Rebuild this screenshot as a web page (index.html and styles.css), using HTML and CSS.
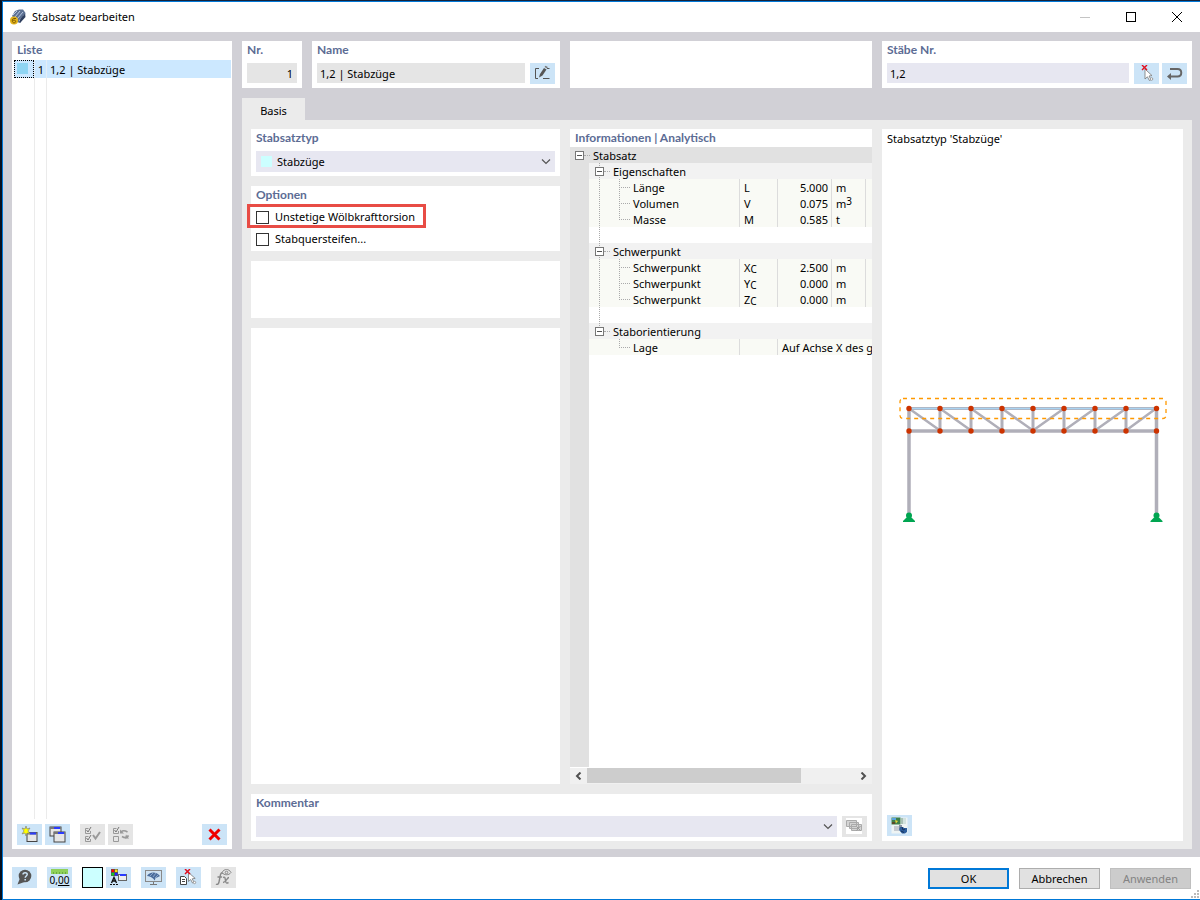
FILE: index.html
```html
<!DOCTYPE html>
<html lang="de">
<head>
    <meta charset="UTF-8">
    <meta name="viewport" content="width=device-width, initial-scale=1">
    <title>Stabsatz bearbeiten</title>
    <link rel="stylesheet" href="styles.css">
</head>
<body>
<div class="window">
    <header class="titlebar">
        <svg class="app-icon" width="16" height="16" viewBox="0 0 16 16">
            <path d="M2 7 5 2 9 .5 13 .5 15.500 4 15 7 10 14 7 13z" fill="#5d7193"/>
            <path d="M3 6 7 2M5 8l5-6M7 10l6-7M9 12l5-6" stroke="#b9c8e0" stroke-width="1"/>
            <path d="M10 14c-1-3 1-6 5-9l.5 3z" fill="#2f3f5e"/>
            <circle cx="4" cy="11.500" r="4" fill="#e3b31c"/>
            <path d="M6 9.500H3.700c-1 0-1.400.7-1.400 2s.4 2.300 1.600 2.300 1.700-.5 1.700-1.400-.6-1.200-1.500-1.200H2.500" fill="none" stroke="#7c5a00"/>
        </svg>
        <h1>Stabsatz bearbeiten</h1>
        <button class="win-btn" aria-label="Minimieren" disabled><svg width="12" height="12"><path d="M1 6.500h10" stroke="#c4c4c4"/></svg></button>
        <button class="win-btn" aria-label="Maximieren"><svg width="12" height="12"><rect x="1.500" y="1.500" width="9" height="9" fill="none" stroke="#000"/></svg></button>
        <button class="win-btn" aria-label="Schließen"><svg width="12" height="12"><path d="M1 1l10 10M11 1 1 11" stroke="#000"/></svg></button>
    </header>

    <main class="workspace">
        <section class="panel list-panel">
            <h2>Liste</h2>
            <ul class="list">
                <li class="selected"><span class="focus"><i></i></span><span class="num">1</span><span class="txt">1,2 | Stabzüge</span></li>
            </ul>
            <div class="toolbar">
                <button class="tool" aria-label="Neu">
                    <svg width="17" height="17" viewBox="0 0 17 17"><rect x="6" y="6.500" width="10" height="9" fill="#e6e6e6" stroke="#444"/><path d="M6 7.500h10" stroke="#777" stroke-width="2"/><path d="M9 7.500h6" stroke="#2a3cff" stroke-width="2"/><path d="M5 0l1 3 3-1-2 3 2 3-3-1-1 3-1-3-3 1 2-3-2-3 3 1z" fill="#ff0" stroke="#777" stroke-width=".6"/></svg>
                </button>
                <button class="tool" aria-label="Kopieren">
                    <svg width="17" height="17" viewBox="0 0 17 17"><rect x="1" y="1" width="11" height="9" fill="#e6e6e6" stroke="#444"/><path d="M1 2h11" stroke="#777" stroke-width="2"/><path d="M5 2h6" stroke="#2a3cff" stroke-width="2"/><rect x="5" y="6" width="11" height="10" fill="#e6e6e6" stroke="#444"/><path d="M5 7h11" stroke="#777" stroke-width="2"/><path d="M9 7h6" stroke="#2a3cff" stroke-width="2"/></svg>
                </button>
                <button class="tool off group" aria-label="Alle auswählen" disabled>
                    <svg width="17" height="17" viewBox="0 0 17 17" fill="none" stroke="#999"><path d="M4.500 2.500h-3v5h5V5M4.500 10.500h-3v5h5V13"/><path d="M2.500 4l1.500 2L7 1M2.500 12l1.500 2L7 9" stroke="#777"/><path d="M9 9l2.500 3.500L16 6" stroke-width="2"/></svg>
                </button>
                <button class="tool off" aria-label="Auswahl umkehren" disabled>
                    <svg width="17" height="17" viewBox="0 0 17 17" fill="none" stroke="#999"><path d="M4.500 2.500h-3v5h5V5M1.500 10.500h5v5h-5z"/><path d="M2.500 4l1.500 2L7 1" stroke="#777"/><path d="M9 6c2-2 4-1.500 6.500 0M16.500 9.500c-1.500 2.500-4 2.500-6.500 1" stroke-width="1.600"/><path d="M8 3.500V7.500h4zM17 12.500H13l1-4z" fill="#999" stroke="none"/></svg>
                </button>
                <button class="tool last" aria-label="Löschen">
                    <svg width="17" height="17" viewBox="0 0 17 17"><path d="M3.500 3.500l10 10M13.500 3.500l-10 10" stroke="#f00000" stroke-width="3"/></svg>
                </button>
            </div>
        </section>

        <div class="editor">
            <div class="head-row">
                <div class="head-left">
                    <section class="panel nr">
                        <h2><label for="nr">Nr.</label></h2>
                        <input id="nr" class="field readonly" value="1" readonly>
                    </section>
                    <section class="panel">
                        <h2><label for="name">Name</label></h2>
                        <div class="row">
                            <input id="name" class="field readonly" value="1,2 | Stabzüge" readonly>
                            <button class="tool" aria-label="Name bearbeiten">
                                <svg width="17" height="17" viewBox="0 0 17 17"><path d="M5 3.500H1.500v10H4M9 13.500h6.500M13 3.500h2.500" fill="none" stroke="#555"/><path d="M5 12.500 6 9l4-6 2.500 1.500-4 6z" fill="#555"/><path d="M10.500 2 11.500.7l2.300 1.400-.8 1.400z" fill="#777"/></svg>
                            </button>
                        </div>
                    </section>
                </div>
                <section class="panel"></section>
                <section class="panel">
                    <h2><label for="staebe">Stäbe Nr.</label></h2>
                    <div class="row">
                        <input id="staebe" class="field" value="1,2">
                        <div class="tools">
                            <button class="tool" aria-label="Stäbe auswählen">
                                <svg width="17" height="17" viewBox="0 0 17 17"><path d="M7 4v10l2.400-2.200 2 3.700 1.600-.9-2-3.600 3-.4z" fill="#fff" stroke="#777" stroke-width=".8"/><path d="M4 0l5 5M9 0 4 5" stroke="#e01020" stroke-width="1.400"/><circle cx="13.500" cy="14" r="1.300" fill="#fff" stroke="#888" stroke-width=".8"/></svg>
                            </button>
                            <button class="tool" aria-label="Richtung umkehren">
                                <svg width="17" height="17" viewBox="0 0 17 17"><path d="M4 4h7.500c5 0 5 7.500 0 7.500H4" fill="none" stroke="#666" stroke-width="2"/><path d="M1 11.500 5 8v7z" fill="#666"/></svg>
                            </button>
                        </div>
                    </div>
                </section>
            </div>

            <nav class="tabs"><button class="tab">Basis</button></nav>

            <div class="tab-body">
                <div class="col-left">
                    <section class="panel">
                        <h2><label for="typ">Stabsatztyp</label></h2>
                        <div class="combo">
                            <i class="swatch"></i>
                            <select id="typ"><option>Stabzüge</option></select>
                            <svg class="chevron" width="10" height="6"><path d="M1 .5l4 4 4-4" fill="none" stroke="#555" stroke-width="1.200"/></svg>
                        </div>
                    </section>
                    <section class="panel options">
                        <h2>Optionen</h2>
                        <label class="check marked"><input type="checkbox">Unstetige Wölbkrafttorsion</label>
                        <label class="check"><input type="checkbox">Stabquersteifen...</label>
                    </section>
                    <section class="panel spare"></section>
                    <section class="panel fill"></section>
                </div>

                <section class="panel info">
                    <h2>Informationen | Analytisch</h2>
                    <div class="tree-area">
                        <table class="tree">
                            <colgroup><col class="c-name"><col class="c-sym"><col class="c-val"><col class="c-unit"><col></colgroup>
                            <tbody>
                                <tr class="root"><td colspan="5"><div class="node"><button class="toggle" aria-label="Stabsatz zuklappen"></button><i class="dash"></i>Stabsatz</div></td></tr>
                                <tr class="group"><td colspan="5"><div class="node rail"><button class="toggle" aria-label="Eigenschaften zuklappen"></button><i class="dash"></i>Eigenschaften</div></td></tr>
                                <tr class="leaf"><td><div class="node rail"><i class="branch"></i>Länge</div></td><td>L</td><td class="val">5.000</td><td>m</td><td></td></tr>
                                <tr class="leaf"><td><div class="node rail"><i class="branch"></i>Volumen</div></td><td>V</td><td class="val">0.075</td><td>m<sup>3</sup></td><td></td></tr>
                                <tr class="leaf"><td><div class="node rail"><i class="branch end"></i>Masse</div></td><td>M</td><td class="val">0.585</td><td>t</td><td></td></tr>
                                <tr><td colspan="5"><div class="node rail"></div></td></tr>
                                <tr class="group"><td colspan="5"><div class="node rail"><button class="toggle" aria-label="Schwerpunkt zuklappen"></button><i class="dash"></i>Schwerpunkt</div></td></tr>
                                <tr class="leaf"><td><div class="node rail"><i class="branch"></i>Schwerpunkt</div></td><td>X<sub>C</sub></td><td class="val">2.500</td><td>m</td><td></td></tr>
                                <tr class="leaf"><td><div class="node rail"><i class="branch"></i>Schwerpunkt</div></td><td>Y<sub>C</sub></td><td class="val">0.000</td><td>m</td><td></td></tr>
                                <tr class="leaf"><td><div class="node rail"><i class="branch end"></i>Schwerpunkt</div></td><td>Z<sub>C</sub></td><td class="val">0.000</td><td>m</td><td></td></tr>
                                <tr><td colspan="5"><div class="node rail"></div></td></tr>
                                <tr class="group"><td colspan="5"><div class="node rail stop"><button class="toggle" aria-label="Staborientierung zuklappen"></button><i class="dash"></i>Staborientierung</div></td></tr>
                                <tr class="leaf"><td><div class="node"><i class="branch end"></i>Lage</div></td><td></td><td colspan="3">Auf Achse X des g</td></tr>
                            </tbody>
                        </table>
                    </div>
                    <div class="scrollbar">
                        <button aria-label="Nach links"><svg width="7" height="8"><path d="M5.500 .5 2 4l3.500 3.500" fill="none" stroke="#505050" stroke-width="2"/></svg></button>
                        <div class="track"><div class="thumb"></div></div>
                        <button aria-label="Nach rechts"><svg width="7" height="8"><path d="M1.500 .5 5 4 1.500 7.500" fill="none" stroke="#505050" stroke-width="2"/></svg></button>
                    </div>
                </section>

                <section class="panel comment">
                    <h2><label for="kommentar">Kommentar</label></h2>
                    <div class="row">
                        <div class="combo">
                            <select id="kommentar"><option></option></select>
                            <svg class="chevron" width="10" height="6"><path d="M1 .5l4 4 4-4" fill="none" stroke="#555" stroke-width="1.200"/></svg>
                        </div>
                        <button class="tool off" aria-label="Kommentar übernehmen" disabled>
                            <svg width="17" height="17" viewBox="0 0 17 17"><path d="M0 0h16v16H0z" fill="#fff"/><g fill="#d4d4d4" stroke="#aaa"><path d="M.5 2.500h10v6H.5zM3.500 4.500h9v6h-9zM5.500 6.500h10v6h-10z"/></g><path d="M10.500 8.500l4 4M14.500 8l-4 4.500" stroke="#999"/></svg>
                        </button>
                    </div>
                </section>

                <section class="panel preview">
                    <p>Stabsatztyp 'Stabzüge'</p>
                    <div class="stage">
                        <svg class="truss" viewBox="0 0 268 126">
                            <g fill="none" stroke="#b0afb9" stroke-width="3">
                                <path d="M10 10v110M257.500 10v110" stroke-width="3.500"/>
                                <path d="M10 34h248" stroke-width="3.500"/>
                                <path d="M41 11v22M72 11v22M103 11v22M134 11v22M165 11v22M196 11v22M227 11v22"/>
                                <path d="M10 11.500l31 22M41 11.500l31 22M72 11.500l31 22M103 11.500l31 22l31-22M165 33.500l31-22M196 33.500l31-22M227 33.500l30-22" stroke-width="2.500"/>
                                <path d="M10 11.500h248"/>
                            </g>
                            <path d="M10 11.500h248" stroke="#a9d3f2" stroke-width="1.500"/>
                            <rect x="1" y="1.500" width="266" height="20" rx="3" fill="none" stroke="#f90" stroke-width="1.300" stroke-dasharray="4 4"/>
                            <g fill="#cc3300">
                                <circle cx="10" cy="11.500" r="2.700"/><circle cx="41" cy="11.500" r="2.700"/><circle cx="72" cy="11.500" r="2.700"/><circle cx="103" cy="11.500" r="2.700"/><circle cx="134" cy="11.500" r="2.700"/><circle cx="165" cy="11.500" r="2.700"/><circle cx="196" cy="11.500" r="2.700"/><circle cx="227" cy="11.500" r="2.700"/><circle cx="257.500" cy="11.500" r="2.700"/>
                                <circle cx="10" cy="34" r="2.700"/><circle cx="41" cy="34" r="2.700"/><circle cx="72" cy="34" r="2.700"/><circle cx="103" cy="34" r="2.700"/><circle cx="134" cy="34" r="2.700"/><circle cx="165" cy="34" r="2.700"/><circle cx="196" cy="34" r="2.700"/><circle cx="227" cy="34" r="2.700"/><circle cx="257.500" cy="34" r="2.700"/>
                            </g>
                            <g fill="#00a551">
                                <circle cx="10" cy="118.500" r="3"/><path d="M4 125v-1l3.500-3.500h5l3.500 3.500v1z"/>
                                <circle cx="257.500" cy="118.500" r="3"/><path d="M251.500 125v-1l3.500-3.500h5l3.500 3.500v1z"/>
                            </g>
                        </svg>
                    </div>
                    <button class="tool" aria-label="Bild speichern">
                        <svg width="17" height="17" viewBox="0 0 17 17"><path d="M.5.500h16v16H.5z" fill="#eef4f4"/><path d="M.5.500h9v7h-9z" fill="#3d7f4a"/><path d="M1 1h4v2H1z" fill="#5aa4e0"/><path d="M4 3l3 1-2 2.500z" fill="#e8d23a"/><path d="M1 5h3v2H1z" fill="#5a4a2a"/><path d="M10 1h2v6h-2z" fill="#a9c0b5"/><path d="M12 1h3v6h-3z" fill="#d2e2de"/><path d="M3 9h5v5H3z" fill="#c5cad0"/><path d="M8 8h3v4H8z" fill="#8793a5"/><path d="M9 10h3l1 1h3v4l-2 1.500h-3L8 13z" fill="#2c5d9c"/><path d="M11 10l1 3 2-1M10 14l3 1.500" stroke="#14305c" fill="none"/></svg>
                    </button>
                </section>
            </div>
        </div>
    </main>

    <footer class="footer">
        <button class="tool" aria-label="Hilfe">
            <svg width="17" height="17" viewBox="0 0 17 17"><circle cx="9" cy="7" r="6.300" fill="#555"/><path d="M4 9 1.500 15.500l7-2.500z" fill="#555"/><path d="M7 5.500C7 3 11.500 3 11.200 5.500 11 7 9.200 7 9.200 8.800M9.200 10v1.500" fill="none" stroke="#cce4f7" stroke-width="1.500"/></svg>
        </button>
        <button class="tool units" aria-label="Einheiten">
            <svg width="17" height="5"><path d="M0 0h17v5H0z" fill="#8ed05a"/><path d="M2.500 3v2M5.500 3v2M8.500 3v2M11.500 3v2M14.500 3v2" stroke="#6aaa40"/></svg>
            <span>0,<u>00</u></span>
        </button>
        <button class="color" aria-label="Farbe"></button>
        <button class="tool" aria-label="Darstellung">
            <svg width="17" height="17" viewBox="0 0 17 17"><path d="M1 0h7v7H1z" fill="#555"/><path d="M1.500.5h2.500V3H1.500z" fill="#f00"/><path d="M5 .5h2.500V3H5z" fill="#fd0"/><path d="M1.500 4H4v2.500H1.500z" fill="#1c2"/><path d="M5 4h2.500v2.500H5z" fill="#22f"/><path d="M1.500 14 4 8.500 6.500 14M2.500 12h3" fill="none" stroke="#111" stroke-width="1.400"/><path d="M0 15.500h9" stroke="#111" stroke-dasharray="2 1"/><rect x="8.500" y="5.500" width="8" height="6" fill="#eee" stroke="#666"/><path d="M10 6h6" stroke="#2a3cff" stroke-width="2"/></svg>
        </button>
        <button class="tool group" aria-label="Ansicht">
            <svg width="17" height="17" viewBox="0 0 17 17"><rect x=".5" y="1.500" width="16" height="11" fill="#cfe2f2" stroke="#888"/><path d="M8.500 13v2.500M5 15.500h7" stroke="#777"/><path d="M2 7C4 3 11 1.500 15 7l-3 1.500c-1.500 0-2 1-2 3-1.500-1.500-3-4-8-4.500z" fill="#4a6c9c"/><path d="M5 7l3-3M8 8l3-4M10 9l3-3" stroke="#9bb5d5" stroke-width=".8"/></svg>
        </button>
        <button class="tool group" aria-label="Objekt auswählen">
            <svg width="17" height="17" viewBox="0 0 17 17"><path d="M.5 7.500h4l2 2v6h-6z" fill="#fff" stroke="#444"/><path d="M2 10.500h3M2 12.500h3" stroke="#444"/><path d="M8.500 3.500v9l2.200-2 1.800 3.500 1.500-.8-1.800-3.400 3-.4z" fill="#fff" stroke="#777" stroke-width=".8"/><path d="M5 0l5 5M10 0 5 5" stroke="#e01020" stroke-width="1.500"/><circle cx="14.500" cy="13.500" r="1.200" fill="#fff" stroke="#888" stroke-width=".8"/></svg>
        </button>
        <button class="tool off group" aria-label="Formel" disabled>
            <svg width="17" height="17" viewBox="0 0 17 17" fill="none" stroke="#888"><path d="M8 4.500C6 3 5.500 5 5 8l-1 5c-.4 2-1.500 3-3 2M2.500 8H7" stroke-width="1.400"/><path d="M8 8.500c2-1 2 0 2.500 3s1 3 3 2M14 8.500c-2 0-3 5-6 5" stroke-width="1.400"/><path d="M7 3.500c2-4 7-4 9 0-2 3-7 3-9 0z"/><circle cx="11.500" cy="3.500" r="1.300"/></svg>
        </button>
        <div class="actions">
            <button class="btn primary">OK</button>
            <button class="btn">Abbrechen</button>
            <button class="btn" disabled>Anwenden</button>
        </div>
        <svg class="grip" width="8" height="8" fill="#bbb"><path d="M6 0h2v2H6zM3 3h2v2H3zM6 3h2v2H6zM0 6h2v2H0zM3 6h2v2H3zM6 6h2v2H6z"/></svg>
    </footer>
</div>
</body>
</html>
```
FILE: styles.css
```css
* { box-sizing: border-box; }
body { margin: 0; font: 11px/16px "Noto Sans", "Open Sans", sans-serif; color: #000; background: #fff; border-top: 1px solid #14233c; border-left: 2px solid #06101f; }
h1, h2, p, ul { margin: 0; padding: 0; font-size: inherit; font-weight: normal; }
button, input, select { font: inherit; color: inherit; margin: 0; padding: 0; border: none; border-radius: 0; }
svg { display: block; }

.window { min-height: calc(100vh - 1px); display: flex; flex-direction: column; border: solid #0078d7; border-width: 1px 0 1px 1px; }

.titlebar { height: 30px; display: flex; align-items: center; padding-left: 7px; }
.titlebar h1 { flex: 1; padding: 0 0 1px 6px; }
.win-btn { width: 46px; height: 30px; display: flex; align-items: center; justify-content: center; background: none; }

.workspace { flex: 1; display: flex; gap: 10px; padding: 9px 8px 8px 9px; background: #d1d0d6; }
.panel { background: #fff; padding: 0 5px; }
.panel h2 { height: 22px; padding-top: 1px; font-family: Lato, "Noto Sans", sans-serif; font-size: 12px; font-weight: bold; color: #5c6c94; white-space: nowrap; }
.row { display: flex; gap: 5px; }
.tools, .toolbar { display: flex; gap: 3px; }

.tool { width: 25px; height: 21px; flex: none; display: flex; align-items: center; justify-content: center; background: #cce4f7; }
.tool.off { background: #e5e5e5; }
.tool.group { margin-left: 7px; }
.tool.last { margin-left: auto; }
.field { flex: 1; width: 100%; min-width: 0; height: 20px; padding: 0 4px 0 3px; background: #e7e7f1; }
.field.readonly { background: #e5e5e5; }

/* list on the left */
.list-panel { width: 220px; flex: none; display: flex; flex-direction: column; padding-bottom: 4px; }
.list-panel h2 { height: 19px; }
.list { flex: 1; list-style: none; margin: 0 -4px 5px -3px; background: linear-gradient(#ebebeb, #ebebeb) 20px 0 / 1px 100% no-repeat, linear-gradient(#ebebeb, #ebebeb) 32px 0 / 1px 100% no-repeat; }
.list li { height: 18px; display: flex; align-items: center; line-height: 20px; }
.list .selected { background: #cce8ff; }
.list .focus { width: 20px; height: 18px; padding: 3px 2px; border: 1px dotted #000; }
.list .focus i { display: block; width: 11px; height: 11px; margin-top: -1px; background: #8fd5f3; }
.list .num { width: 13px; height: 18px; padding-right: 2px; text-align: right; border: solid #e4eef6; border-width: 0 1px; }
.list .txt { height: 18px; padding-left: 3px; }

.editor { flex: 1; min-width: 0; display: flex; flex-direction: column; }
.head-row { display: grid; grid-template-columns: minmax(0, 318fr) minmax(0, 302fr) minmax(0, 310fr); gap: 10px; }
.head-row .panel { height: 47px; }
.head-left { display: grid; grid-template-columns: 60px 1fr; gap: 10px; }
.nr .field { text-align: right; }

.tabs { margin-top: 10px; }
.tab { display: block; width: 63px; height: 22px; padding-top: 3px; background: #ebebeb; }

.tab-body { flex: 1; display: grid; grid-template-columns: minmax(0, 309fr) minmax(0, 302fr) minmax(0, 301fr); grid-template-rows: 1fr 47px; gap: 10px; padding: 9px 9px 8px; background: #ebebeb; }
.col-left { display: flex; flex-direction: column; gap: 10px; }
.col-left .panel { min-height: 47px; }
.col-left .spare { height: 57px; }
.col-left .fill { flex: 1; }

.combo { flex: 1; height: 21px; display: flex; align-items: center; padding: 0 4px 0 5px; background: #e7e7f1; }
.combo select { flex: 1; width: 100%; height: 21px; appearance: none; background: none; margin-right: -10px; }
.combo .chevron { pointer-events: none; }
.combo .swatch { width: 11px; height: 11px; margin-right: 5px; background: #ccffff; }

.options { padding-bottom: 1px; }
.options h2 { height: 20px; }
.check { display: flex; align-items: center; width: fit-content; height: 22px; gap: 6px; position: relative; }
.check input { appearance: none; width: 13px; height: 13px; border: 1px solid #333; background: #fff; }
.marked::after { content: ""; position: absolute; inset: -2px -11px 0 -9px; border: 3px solid #e84c45; pointer-events: none; }

/* info tree */
.info { display: flex; flex-direction: column; padding: 0; }
.info h2 { height: 18px; padding-left: 5px; }
.tree-area { flex: 1; overflow: hidden; background: linear-gradient(#e1e1e1, #e1e1e1) 0 0 / 19px 100% no-repeat; margin-bottom: 1px; }
.tree { width: 100%; table-layout: fixed; border-collapse: separate; border-spacing: 0; }
.c-name { width: 170px; }
.c-sym { width: 38px; }
.c-val { width: 54px; }
.c-unit { width: 34px; }
.tree td { height: 16px; padding: 0 4px; line-height: 16px; white-space: nowrap; }
.tree td:first-child { padding: 0 0 0 19px; background-clip: content-box; }
.root td { background: #e1e1e1; }
.tree .root td:first-child { padding: 0; }
.group td { background: #f2f2f2; }
.leaf td { background: #f9faf5; border-right: 1px solid #dcdcdc; }
.tree .leaf td + td { padding-top: 1px; line-height: 15px; }
.leaf td:last-child { border-right: none; }
.tree .val { text-align: right; padding-right: 3px; }
.tree sup, .tree sub { font-size: 10px; line-height: 1px; }
.tree sup { vertical-align: 3px; }
.tree sub { vertical-align: -1px; }
.node { height: 16px; display: flex; align-items: flex-end; line-height: 15px; }
.rail { background: repeating-linear-gradient(#aaa 0 1px, transparent 1px 2px) 10px 0 / 1px 100% no-repeat; }
.rail.stop { background-size: 1px 8px; }
.toggle { width: 9px; height: 9px; margin: 0 0 3px 6px; border: 1px solid #777; background: linear-gradient(#555, #555) center / 5px 1px no-repeat #fff; }
.root .toggle { margin-left: 5px; }
.dash { width: 6px; margin: 0 3px 7px 0; border-top: 1px dotted #aaa; }
.branch { align-self: stretch; width: 14px; margin: 0 0 0 30px; background: repeating-linear-gradient(#aaa 0 1px, transparent 1px 2px) 0 0 / 1px 100% no-repeat, repeating-linear-gradient(90deg, #aaa 0 1px, transparent 1px 2px) 0 8px / 12px 1px no-repeat; }
.branch.end { background-size: 1px 8px, 12px 1px; }

.scrollbar { height: 16px; display: flex; background: #f0f0f0; }
.scrollbar button { width: 17px; display: flex; align-items: center; justify-content: center; background: none; }
.track { flex: 1; }
.thumb { width: 80%; height: 15px; background: #cdcdcd; }

.comment { grid-column: 1 / 3; }
.preview { grid-column: 3; grid-row: 1 / 3; display: flex; flex-direction: column; padding-bottom: 5px; }
.preview p { height: 22px; padding-top: 2px; }
.preview .stage { flex: 1; display: flex; align-items: center; justify-content: center; padding-bottom: 46px; }
.truss { width: 268px; max-width: 100%; }

.footer { height: 42px; display: flex; align-items: flex-start; padding: 10px 1px 1px 9px; }
.footer .color { width: 21px; height: 21px; margin: 0 3px 0 10px; border: 1px solid #000; background: #ccffff; }
.footer .tool.group, .footer .units { margin-left: 10px; }
.units { flex-direction: column; }
.units span { font-size: 10px; line-height: 12px; }
.actions { margin-left: auto; padding-top: 1px; display: flex; gap: 10px; }
.btn { width: 81px; height: 21px; border: 1px solid #adadad; background: #e1e1e1; }
.btn.primary { border: 2px solid #0078d7; }
.btn:disabled { color: #838383; background: #ccc; border-color: #bfbfbf; }
.grip { align-self: flex-end; }
```
